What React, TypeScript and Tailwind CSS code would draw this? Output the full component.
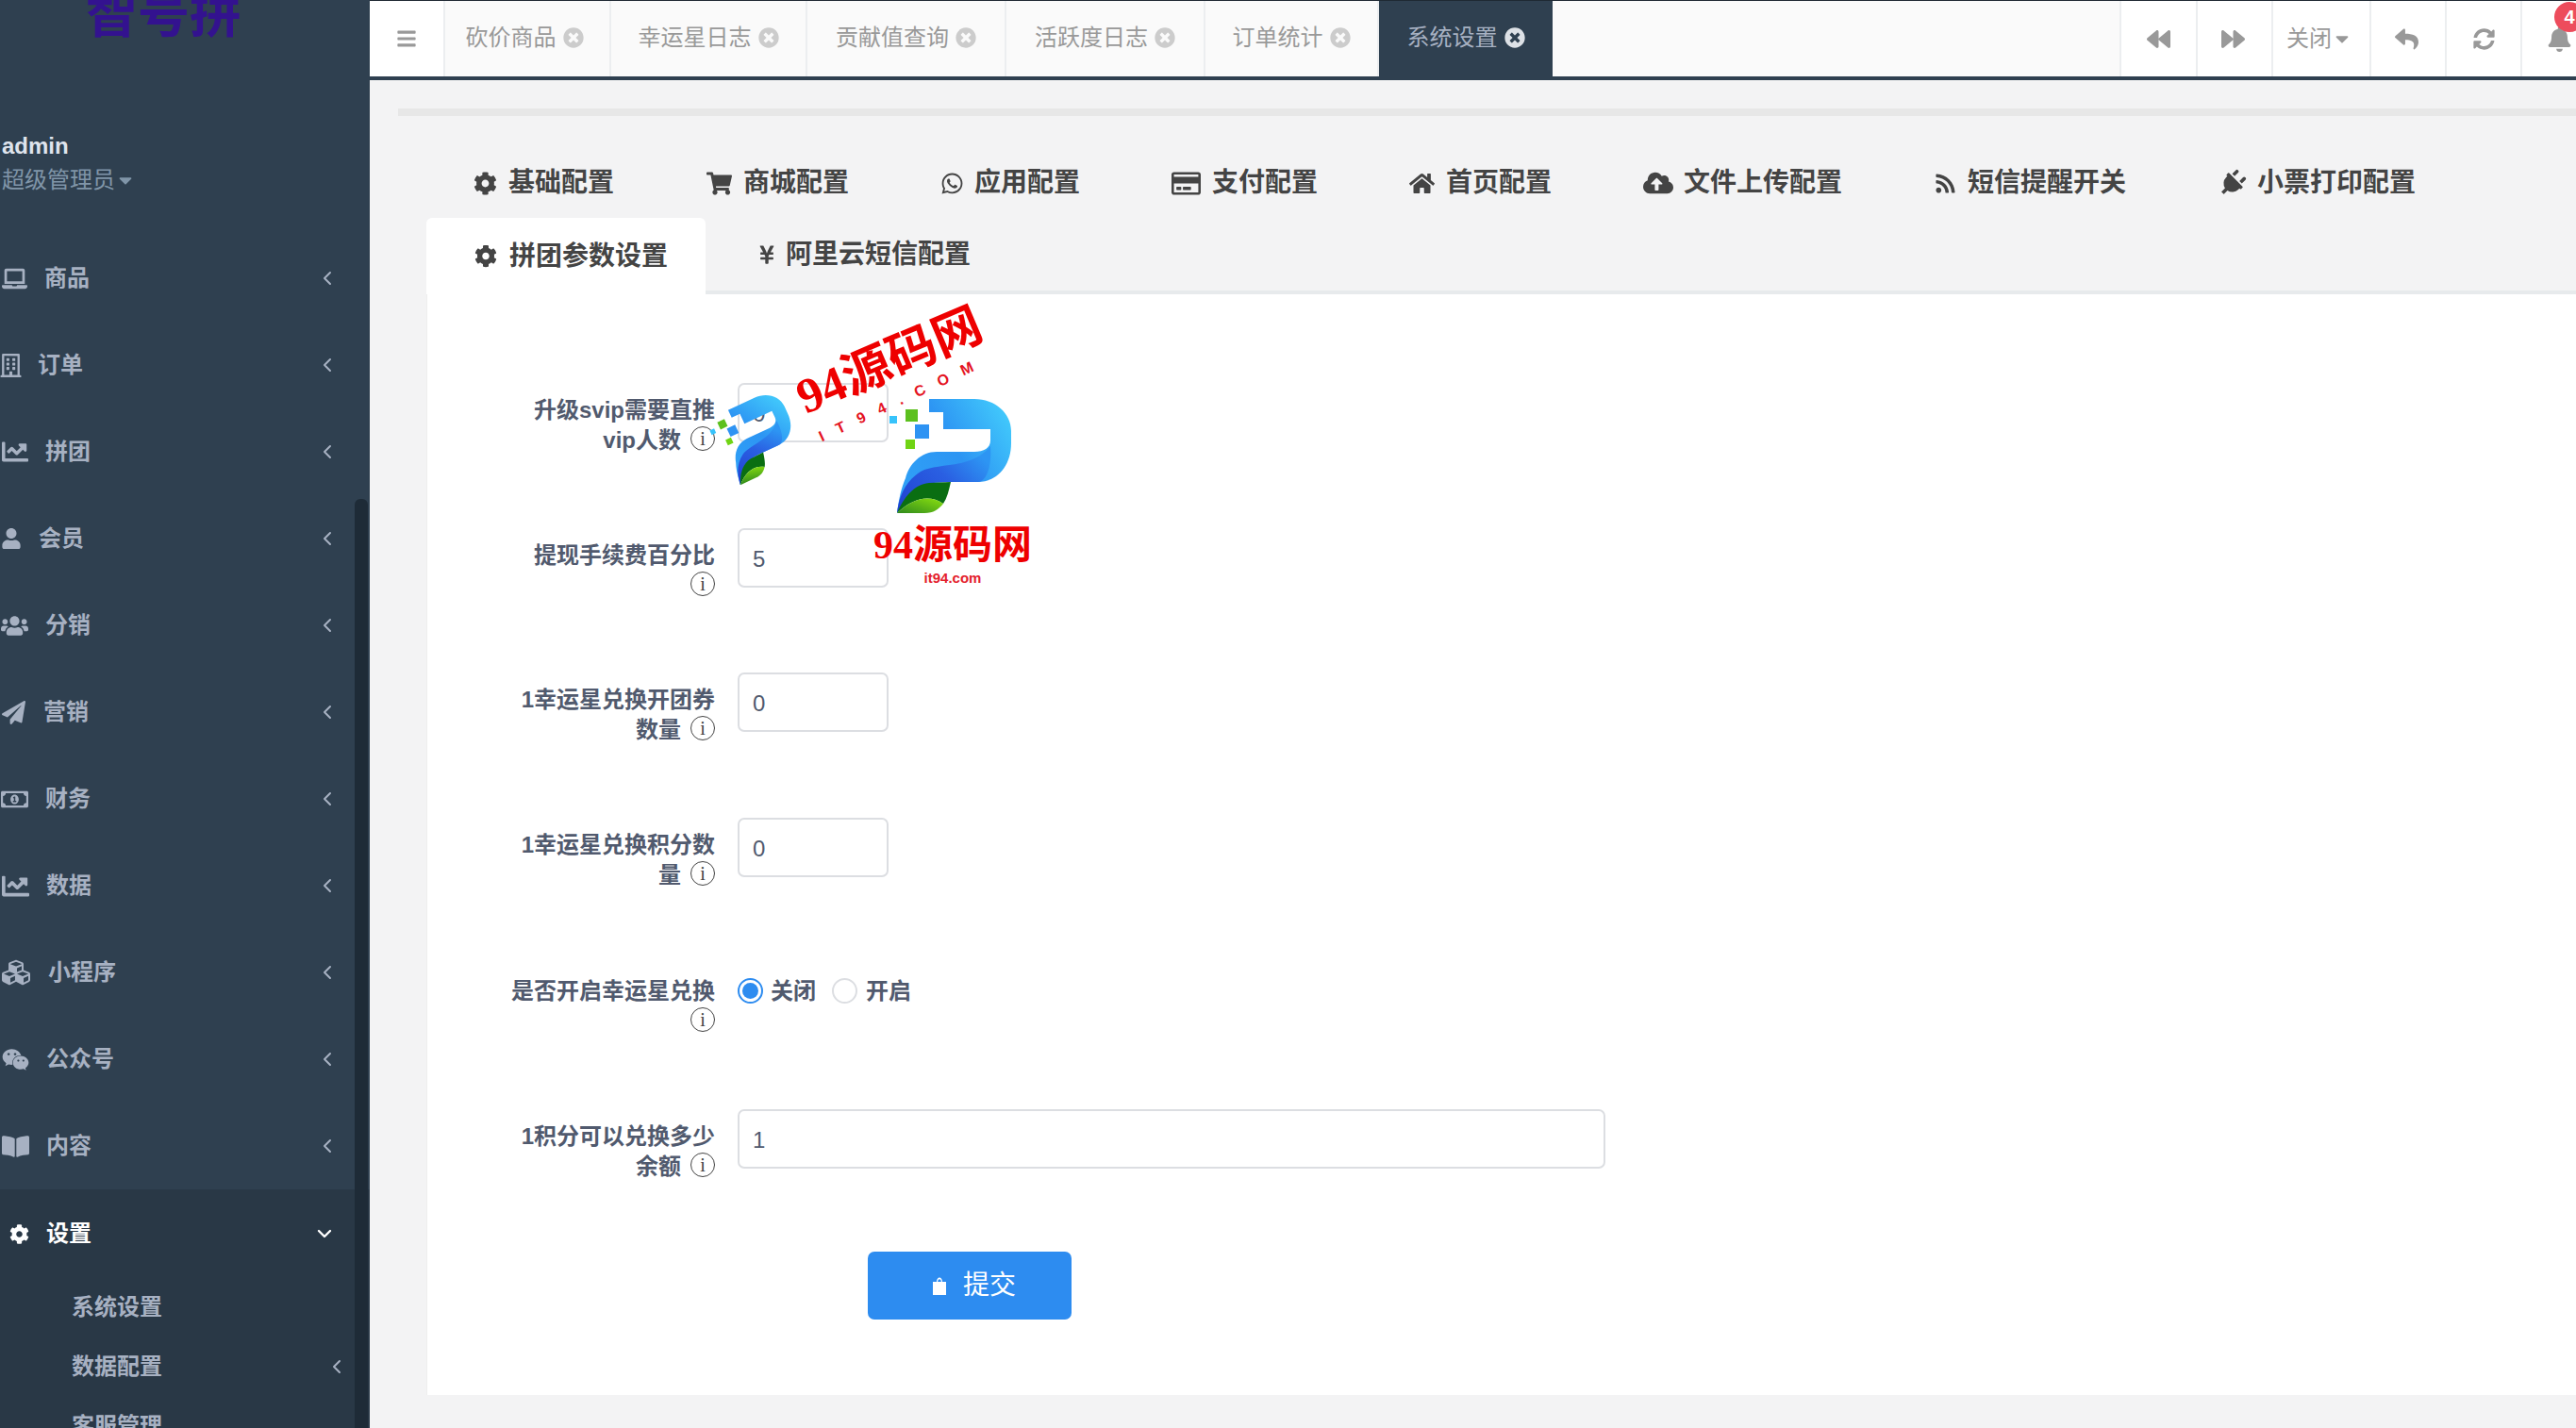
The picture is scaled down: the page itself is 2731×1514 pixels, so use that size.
import React from 'react';
import { ChevronDown, ChevronLeft } from 'lucide-react';
import {
  FaBackward,
  FaBars,
  FaBell,
  FaBookOpen,
  FaCaretDown,
  FaChartLine,
  FaCloudUploadAlt,
  FaCog,
  FaCubes,
  FaForward,
  FaHome,
  FaLaptop,
  FaPaperPlane,
  FaPlug,
  FaRegBuilding,
  FaRegCreditCard,
  FaRegMoneyBillAlt,
  FaReply,
  FaRss,
  FaShoppingCart,
  FaSyncAlt,
  FaTimesCircle,
  FaUser,
  FaUsers,
  FaWeixin,
  FaWhatsapp,
  FaYenSign,
} from 'react-icons/fa';

const menu = [
  { label: '商品', icon: FaLaptop, size: 27, box: 'w-[26px]' },
  { label: '订单', icon: FaRegBuilding, size: 25, box: 'w-[19px]' },
  { label: '拼团', icon: FaChartLine, size: 28, box: 'w-[27px]' },
  { label: '会员', icon: FaUser, size: 22, box: 'w-[20px]' },
  { label: '分销', icon: FaUsers, size: 29, box: 'w-[27px]' },
  { label: '营销', icon: FaPaperPlane, size: 25, box: 'w-[25px]' },
  { label: '财务', icon: FaRegMoneyBillAlt, size: 29, box: 'w-[27px]' },
  { label: '数据', icon: FaChartLine, size: 29, box: 'w-[28px]' },
  { label: '小程序', icon: FaCubes, size: 30, box: 'w-[30px]' },
  { label: '公众号', icon: FaWeixin, size: 29, box: 'w-[28px]' },
  { label: '内容', icon: FaBookOpen, size: 29, box: 'w-[28px]' },
];

const headerTabs = [
  { label: '砍价商品', width: 'w-[176px] pr-[6px]' },
  { label: '幸运星日志', width: 'w-[208px]' },
  { label: '贡献值查询', width: 'w-[211px]' },
  { label: '活跃度日志', width: 'w-[211px]' },
  { label: '订单统计', width: 'w-[184px]' },
];

const configTabs = [
  { label: '基础配置', icon: FaCog, size: 25, box: 'w-[24px]', extra: '' },
  { label: '商城配置', icon: FaShoppingCart, size: 27, box: 'w-[26px]', extra: '' },
  { label: '应用配置', icon: FaWhatsapp, size: 25, box: 'w-[22px]', extra: '' },
  { label: '支付配置', icon: FaRegCreditCard, size: 31, box: 'w-[29px]', extra: '' },
  { label: '首页配置', icon: FaHome, size: 27, box: 'w-[25px]', extra: '' },
  { label: '文件上传配置', icon: FaCloudUploadAlt, size: 32, box: 'w-[29px]', extra: '' },
  { label: '短信提醒开关', icon: FaRss, size: 23, box: 'w-[22px]', extra: '' },
  { label: '小票打印配置', icon: FaPlug, size: 29, box: 'w-[28px]', extra: 'rotate-45' },
];

function Info() {
  return (
    <span className="ml-[10px] inline-flex h-[26px] w-[26px] items-center justify-center rounded-full border border-[#444] align-[3px] font-['Liberation_Serif',serif] text-[20px] font-normal leading-none text-[#444]">
      i
    </span>
  );
}

function Label({ children }: { children: React.ReactNode }) {
  return (
    <div className="w-[305px] shrink-0 pt-[13px] text-right text-[24px] font-bold leading-[32px] text-[#515a6e]">
      {children}
    </div>
  );
}

function Field({ value, wide }: { value: string; wide?: boolean }) {
  return (
    <input
      readOnly
      value={value}
      className={`h-[63px] rounded-[7px] border-2 border-[#dcdee2] bg-white pl-[14px] pt-[2px] text-[24px] text-[#515a6e] outline-none ${
        wide ? 'w-[920px]' : 'w-[160px]'
      }`}
    />
  );
}

function BagIcon() {
  return (
    <svg viewBox="0 0 14 20" className="h-[20px] w-[14px] fill-white">
      <path d="M0 6h14v14H0z" />
      <path d="M4 6C4 0 10 0 10 6H8.8C8.8 2.4 5.2 2.4 5.2 6z" />
    </svg>
  );
}

function PLogo({ className }: { className: string }) {
  return (
    <svg viewBox="0 0 135 128" className={className}>
      <defs>
        <linearGradient id="pMain" x1="1" y1="0" x2="0" y2="0.6">
          <stop offset="0" stopColor="#45d2fd" />
          <stop offset="0.55" stopColor="#2d95f3" />
          <stop offset="1" stopColor="#2f9ff6" />
        </linearGradient>
        <linearGradient id="pBand" x1="0" y1="1" x2="1" y2="0.3">
          <stop offset="0" stopColor="#2040d0" />
          <stop offset="0.6" stopColor="#2a5fe2" />
          <stop offset="1" stopColor="#2d95f3" />
        </linearGradient>
        <linearGradient id="pLeaf" x1="0" y1="1" x2="1" y2="0">
          <stop offset="0" stopColor="#2f8a1c" />
          <stop offset="1" stopColor="#8ae010" />
        </linearGradient>
      </defs>
      <rect x="3" y="21" width="8" height="8" fill="#37c3fb" />
      <rect x="20" y="14" width="13" height="13" fill="#5cc01e" />
      <rect x="30" y="30" width="15" height="15" fill="#2e93f3" />
      <rect x="20" y="46" width="10" height="10" fill="#70d414" />
      <path
        d="M45 3H93C115 3 132 18 132 37V50C132 74 117 91 97 91H67C45 91 28 93 11 124C13 108 16 96 20 87C24 72 36 59 53 59H93C103 59 110 55 110 47V35H60V17H45Z"
        fill="url(#pMain)"
      />
      <path
        d="M11 124C13 106 20 90 36 80C54 70 90 78 110 53C112 78 104 91 97 91H67C45 91 28 93 11 124Z"
        fill="url(#pBand)"
      />
      <path d="M11 124C18 108 28 94 45 92L68 91C66 100 64 108 60 114C45 104 28 108 11 124Z" fill="#0a6e12" />
      <path d="M11 124C28 108 45 104 60 114C55 120 50 124 40 124Z" fill="url(#pLeaf)" />
    </svg>
  );
}

function Watermark() {
  return (
    <>
      <PLogo className="absolute left-[305px] top-[111px] h-[82px] w-[87px] -rotate-[25deg]" />
      <PLogo className="absolute left-[487px] top-[108px] h-[128px] w-[135px]" />
      <span className="absolute left-[490px] top-[71px] -translate-x-1/2 -translate-y-1/2 -rotate-[23deg] whitespace-nowrap font-['Liberation_Serif','Noto_Sans_CJK_SC',serif] text-[52px] font-bold leading-none text-[#ee0000]">
        94源码网
      </span>
      <span className="absolute left-[504px] top-[111px] -translate-x-1/2 -translate-y-1/2 -rotate-[25deg] whitespace-nowrap text-[16px] font-bold leading-none tracking-[15px] text-[#e4131f]">
        IT94.COM
      </span>
      <span className="absolute left-[557px] top-[266px] -translate-x-1/2 -translate-y-1/2 whitespace-nowrap font-['Liberation_Serif','Noto_Sans_CJK_SC',serif] text-[42px] font-bold leading-none text-[#ee0000]">
        94源码网
      </span>
      <span className="absolute left-[557px] top-[300px] -translate-x-1/2 -translate-y-1/2 whitespace-nowrap text-[15px] font-bold leading-none text-[#e4202c]">
        it94.com
      </span>
    </>
  );
}

function Sidebar() {
  return (
    <aside className="relative flex h-full w-[392px] shrink-0 flex-col overflow-hidden bg-[#2f4050]">
      <div className="h-[249px] shrink-0 pl-[2px]">
        <div className="-mt-[13px] pl-[89px] text-[55px] font-bold leading-[56px] text-[#33128f]">智号拼</div>
        <div className="mt-[97px] text-[24px] font-bold leading-[30px] text-[#dfe4ed]">admin</div>
        <div className="mt-[6px] flex items-center text-[24px] leading-[30px] text-[#8095a8]">
          超级管理员
          <FaCaretDown size={22} />
        </div>
      </div>
      {menu.map((item) => (
        <div key={item.label} className="flex h-[92px] shrink-0 items-center gap-[19px] pl-[2px] pr-[33px] text-[#a7b1c2]">
          <span className={`flex justify-center ${item.box}`}>
            <item.icon size={item.size} className="shrink-0" />
          </span>
          <span className="text-[24px] font-bold">{item.label}</span>
          <ChevronLeft size={24} strokeWidth={2} className="ml-auto" />
        </div>
      ))}
      <div className="flex-1 bg-[#293846] pt-px">
        <div className="flex h-[92px] items-center gap-[18px] pl-[10px] pr-[36px] text-white">
          <FaCog size={21} />
          <span className="text-[24px] font-bold">设置</span>
          <ChevronDown size={24} strokeWidth={2.4} className="ml-auto" />
        </div>
        {['系统设置', '数据配置', '客服管理'].map((label, i) => (
          <div key={label} className="flex h-[63px] items-center pl-[76px] pr-[23px] text-[24px] font-bold text-[#a7b1c2]">
            {label}
            {i === 1 && <ChevronLeft size={24} strokeWidth={2} className="ml-auto" />}
          </div>
        ))}
      </div>
      {/* scrollbar thumb sits on top of the menu */}
      <div className="absolute bottom-0 right-[2px] top-[529px] w-[14px] rounded-t-[6px] bg-[#1e2b37]" />
    </aside>
  );
}

function Header() {
  return (
    <header className="flex h-[85px] shrink-0 overflow-hidden border-b-4 border-t border-b-[#2f4050] border-t-[#1f2933] bg-[#fafafa] text-[24px] text-[#999]">
      <div className="flex w-[80px] shrink-0 items-center justify-center border-r-2 border-[#eceef0] bg-white">
        <FaBars size={22} />
      </div>
      {headerTabs.map((tab) => (
        <div key={tab.label} className={`flex shrink-0 items-center justify-center gap-[7px] pb-[2px] border-r-2 border-[#eceef0] ${tab.width}`}>
          {tab.label}
          <FaTimesCircle size={22} className="text-[#ccc]" />
        </div>
      ))}
      <div className="-mb-1 flex h-[84px] w-[184px] shrink-0 items-center justify-center gap-[7px] pb-[6px] bg-[#2f4050] text-[#a7b1c2]">
        系统设置
        <FaTimesCircle size={22} className="text-[#dde1e6]" />
      </div>
      <div className="ml-auto flex bg-white">
        <div className="flex w-[81px] items-center justify-center border-l-2 border-[#eceef0]">
          <FaBackward size={25} />
        </div>
        <div className="flex w-[80px] items-center justify-center pr-[4px] border-l-2 border-[#eceef0]">
          <FaForward size={25} />
        </div>
        <div className="flex w-[104px] items-center justify-center pr-[4px] border-l-2 border-[#eceef0]">
          关闭
          <FaCaretDown size={22} />
        </div>
        <div className="flex w-[80px] items-center justify-center pr-[3px] border-l-2 border-[#eceef0]">
          <FaReply size={25} />
        </div>
        <div className="flex w-[80px] items-center justify-center border-l-2 border-[#eceef0]">
          <FaSyncAlt size={23} />
        </div>
        <div className="relative flex w-[59px] items-center border-l-2 border-[#eceef0] pl-[26px]">
          <FaBell size={27} className="shrink-0" />
          <span className="absolute left-[34px] top-[1px] flex h-[32px] w-[32px] items-center justify-center rounded-full bg-[#ed4c5c] text-[20px] font-bold text-white">
            4
          </span>
        </div>
      </div>
    </header>
  );
}

function ConfigTabs() {
  return (
    <div className="pl-[1px] text-[28px] font-bold text-[#444]">
      <div className="flex h-[78px] items-center pt-[4px]">
        {configTabs.map((tab) => (
          <div key={tab.label} className="flex shrink-0 items-center gap-[13px] px-[49px]">
            <span className={`flex justify-center ${tab.box}`}>
              <tab.icon size={tab.size} className={`shrink-0 ${tab.extra}`} />
            </span>
            {tab.label}
          </div>
        ))}
      </div>
      <div className="-ml-[1px] flex h-[81px] border-b-4 border-[#e7eaec]">
        <div className="-mb-1 flex h-[81px] w-[296px] items-center gap-[13px] rounded-t-[6px] bg-white pl-[51px]">
          <span className="flex w-[24px] justify-center">
            <FaCog size={25} />
          </span>
          拼团参数设置
        </div>
        <div className="flex items-center gap-[11px] pl-[56px]">
          <span className="flex w-[18px] justify-center">
            <FaYenSign size={22} className="shrink-0" />
          </span>
          阿里云短信配置
        </div>
      </div>
    </div>
  );
}

function Form() {
  return (
    <section className="relative h-[1167px] border-l border-[#eeeeee] bg-white pt-[94px]">
      <div className="flex h-[154px] gap-[24px]">
        <Label>
          升级svip需要直推
          <br />
          vip人数
          <Info />
        </Label>
        <Field value="0" />
      </div>
      <div className="flex h-[153px] gap-[24px]">
        <Label>
          提现手续费百分比
          <br />
          <Info />
        </Label>
        <Field value="5" />
      </div>
      <div className="flex h-[154px] gap-[24px]">
        <Label>
          1幸运星兑换开团券
          <br />
          数量
          <Info />
        </Label>
        <Field value="0" />
      </div>
      <div className="flex h-[155px] gap-[24px]">
        <Label>
          1幸运星兑换积分数
          <br />
          量
          <Info />
        </Label>
        <Field value="0" />
      </div>
      <div className="flex h-[154px] gap-[24px]">
        <Label>
          是否开启幸运星兑换
          <br />
          <Info />
        </Label>
        <div className="flex h-[57px] items-center text-[24px] font-bold text-[#515a6e]">
          <span className="flex h-[27px] w-[27px] items-center justify-center rounded-full border-2 border-[#2d8cf0]">
            <span className="h-[17px] w-[17px] rounded-full bg-[#2d8cf0]" />
          </span>
          <span className="ml-[8px]">关闭</span>
          <span className="ml-[17px] h-[27px] w-[27px] rounded-full border-2 border-[#dcdee2]" />
          <span className="ml-[9px]">开启</span>
        </div>
      </div>
      <div className="flex h-[151px] gap-[24px]">
        <Label>
          1积分可以兑换多少
          <br />
          余额
          <Info />
        </Label>
        <Field value="1" wide />
      </div>
      <div className="pl-[467px]">
        <button className="flex h-[72px] w-[216px] items-center justify-center gap-[18px] rounded-[7px] bg-[#2d8cf0] pl-[10px] text-[28px] text-white">
          <BagIcon />
          提交
        </button>
      </div>
      <Watermark />
    </section>
  );
}

export default function App() {
  return (
    <div className="flex h-[1514px] w-full overflow-hidden bg-[#f3f3f4] font-['Liberation_Sans','Noto_Sans_CJK_SC',sans-serif]">
      <Sidebar />
      <main className="flex min-w-0 flex-1 flex-col overflow-hidden">
        <Header />
        <div className="pl-[60px]">
          <div className="-ml-[30px] mb-[30px] mt-[30px] h-[8px] bg-[#e7e7e7]" />
          <ConfigTabs />
          <Form />
        </div>
      </main>
    </div>
  );
}
